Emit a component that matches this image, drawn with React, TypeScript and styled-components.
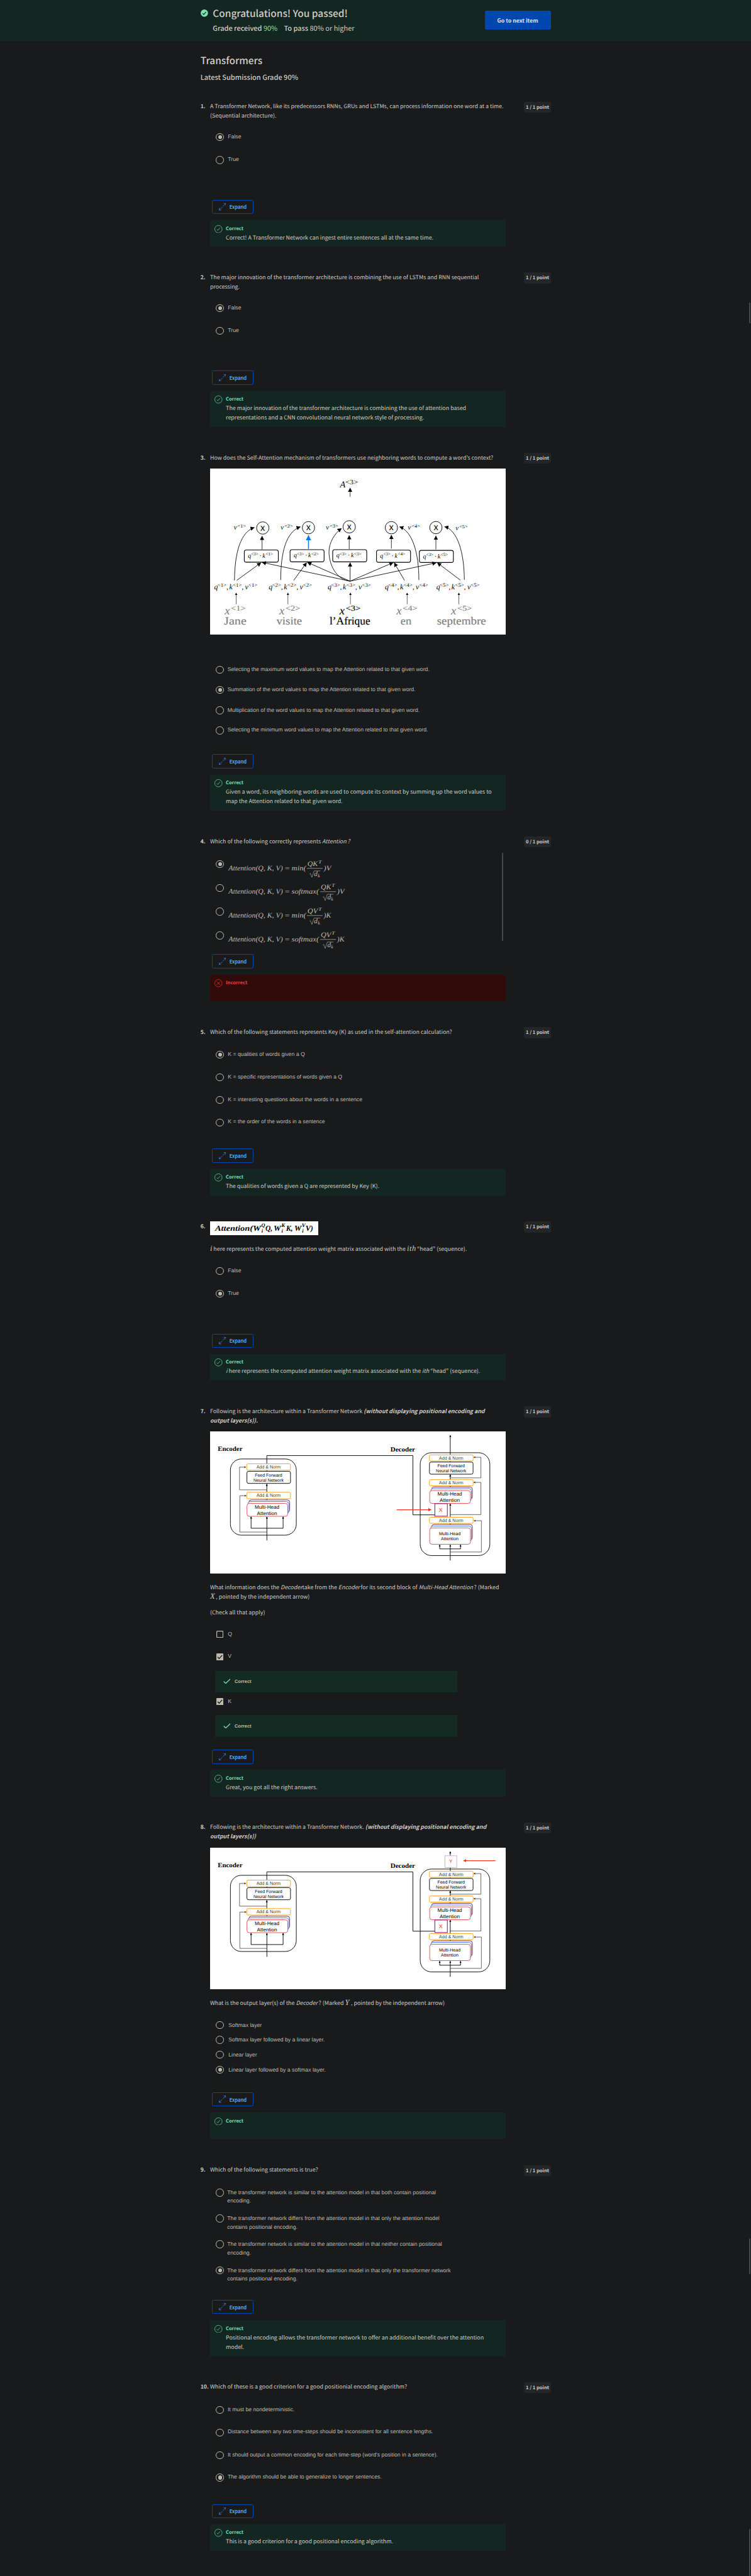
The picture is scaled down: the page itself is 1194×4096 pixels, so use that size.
import React from "react";
import styled, { createGlobalStyle, css } from "styled-components";

/* The page is designed on a 1920px wide canvas and drawn at a reduced scale. */
const SCALE = 0.62191;
const u = (n: number) => `${(n * SCALE).toFixed(3)}px`;

const sans = `"Noto Sans CJK KR", "Noto Sans", sans-serif`;
const arial = `"Liberation Sans", Arial, sans-serif`;
const serif = `"Liberation Serif", "Times New Roman", serif`;

const color = {
  page: "#181a1b",
  text: "#d0ccc6",
  label: "#bfbab0",
  green: "#7de2b0",
  greenPanel: "#142621",
  greenRow: "#132b23",
  red: "#ff3838",
  redPanel: "#310a0a",
  blue: "#0048b0",
  link: "#4ea2f7",
  badge: "#222628",
};

const GlobalStyle = createGlobalStyle`
  body {
    margin: 0;
    background: ${color.page};
    color: ${color.text};
    font-family: ${sans};
    text-rendering: geometricPrecision;
    overflow: hidden;
  }
`;

const Page = styled.div`
  position: relative;
  width: 1194px;
  height: 4096px;
  overflow: hidden;
  background: ${color.page};
`;

const Banner = styled.header`
  box-sizing: border-box;
  height: ${u(104)};
  padding: ${u(15.5)} ${u(512)} 0 ${u(512.5)};
  display: flex;
  justify-content: space-between;
  background: ${color.greenPanel};
`;
const BannerInfo = styled.div`
  display: flex;
  gap: ${u(12.5)};
`;
const BannerIcon = styled.svg`
  width: ${u(19)};
  height: ${u(19)};
  margin-top: ${u(9)};
`;
const BannerTitle = styled.h1`
  margin: 0;
  font-size: ${u(24.83)};
  line-height: ${u(36)};
  font-weight: 500;
  white-space: nowrap;
`;
const GradeLine = styled.div`
  display: flex;
  gap: ${u(16.5)};
  margin-top: ${u(10.3)};
  font-size: ${u(17.65)};
  line-height: ${u(24)};
  white-space: nowrap;
`;
const Strong = styled.span`
  font-weight: 500;
`;
const Passed = styled.span`
  color: ${color.green};
`;
const NextButton = styled.button`
  width: ${u(169)};
  height: ${u(48)};
  margin-top: ${u(12.5)};
  padding: 0;
  border: 0;
  border-radius: ${u(4)};
  background: ${color.blue};
  color: #e6e3df;
  font: 700 ${u(14.03)} ${sans};
`;

const Main = styled.main`
  padding: ${u(32.3)} ${u(512)} 0 ${u(512.5)};
`;
const Title = styled.h2`
  margin: 0;
  font-size: ${u(24.88)};
  line-height: ${u(36)};
  font-weight: 500;
`;
const Subtitle = styled.h3`
  margin: ${u(14.5)} 0 ${u(49.2)};
  font-size: ${u(17.73)};
  line-height: ${u(24)};
  font-weight: 500;
`;

const QuestionBox = styled.section`
  display: grid;
  grid-template-columns: ${u(24.5)} ${u(756)} ${u(68)};
  column-gap: 0;
  align-items: start;
  margin-bottom: ${u(66)};
`;
const Num = styled.div`
  padding-top: ${u(1)};
  font-size: ${u(14)};
  line-height: ${u(24)};
  font-weight: 700;
  white-space: nowrap;
`;
const Badge = styled.div`
  margin-left: ${u(47)};
  width: ${u(68)};
  height: ${u(28)};
  border-radius: ${u(4)};
  background: ${color.badge};
  font-size: ${u(12.16)};
  line-height: ${u(28)};
  font-weight: 700;
  text-align: center;
  white-space: nowrap;
`;
const Prompt = styled.p<{ $top?: number }>`
  margin: ${(p) => u(p.$top ?? 0)} 0 ${u(-1)};
  padding-top: ${u(1)};
  font-size: ${u(14.31)};
  line-height: ${u(24)};
  white-space: nowrap;
`;
const BoldItalic = styled.span`
  font-weight: 700;
  font-style: italic;
`;
const Em = styled.em<{ $gap?: number }>`
  margin-right: ${(p) => u(p.$gap ?? 0)};
`;
const MathWord = styled.span<{ $gap?: number }>`
  font: italic 400 ${u(20)} / 1 ${serif};
  line-height: 0;
  letter-spacing: ${u(0.9)};
  margin-right: ${(p) => u(p.$gap ?? 0)};
`;
const Figure = styled.svg<{ $w: number; $h: number; $top?: number }>`
  display: block;
  width: ${(p) => u(p.$w)};
  height: ${(p) => u(p.$h)};
  margin-top: ${(p) => u(p.$top ?? 0)};
  background: #fff;
`;

const Options = styled.div<{ $top: number; $height: number }>`
  position: relative;
  box-sizing: border-box;
  margin-top: ${(p) => u(p.$top)};
  height: ${(p) => u(p.$height)};
  padding-left: ${u(15.2)};
`;
const Option = styled.div<{ $pitch: number }>`
  display: flex;
  align-items: flex-start;
  gap: ${u(10)};
  height: ${(p) => u(p.$pitch)};
`;
const RadioMark = styled.span<{ $on?: boolean }>`
  box-sizing: border-box;
  flex: none;
  width: ${u(20)};
  height: ${u(20)};
  border: ${u(2)} solid ${color.label};
  border-radius: 50%;
  display: grid;
  place-items: center;
  ${(p) =>
    p.$on &&
    css`
      &::after {
        content: "";
        width: ${u(10)};
        height: ${u(10)};
        border-radius: 50%;
        background: ${color.label};
      }
    `}
`;
const OptionText = styled.span<{ $drop: number; $indent: number }>`
  margin-top: ${(p) => u(p.$drop)};
  margin-left: ${(p) => u(p.$indent)};
  color: ${color.label};
  font: 400 ${u(13.98)} / ${u(21)} ${arial};
  white-space: nowrap;
`;
const Formula = styled.svg`
  flex: none;
  width: ${u(290)};
  height: ${u(60)};
  margin-top: ${u(-10)};
  margin-left: ${u(-1)};
  overflow: visible;
`;
const OptionsScroll = styled.span`
  position: absolute;
  right: ${u(6.5)};
  top: ${u(-19)};
  width: ${u(3)};
  height: ${u(225)};
  border-radius: ${u(2)};
  background: #46494b;
`;
const Checkbox = styled.svg`
  flex: none;
  width: ${u(18)};
  height: ${u(18)};
  margin: ${u(1)};
`;
const RowFeedback = styled.div<{ $after: number }>`
  display: flex;
  align-items: center;
  gap: ${u(10.5)};
  box-sizing: border-box;
  width: ${u(620)};
  height: ${u(56)};
  margin: 0 0 ${(p) => u(p.$after)} ${u(-2.4)};
  padding-left: ${u(20.5)};
  background: ${color.greenRow};
  color: ${color.label};
  font: 700 ${u(12.05)} ${arial};
`;
const RowTick = styled.svg`
  width: ${u(19)};
  height: ${u(14)};
  margin-bottom: ${u(3)};
`;

const ExpandButton = styled.button`
  display: flex;
  align-items: center;
  gap: ${u(9)};
  box-sizing: border-box;
  width: ${u(105)};
  height: ${u(36)};
  margin: 0 0 ${u(16)} ${u(5.5)};
  padding: 0 0 0 ${u(15)};
  border: 1px solid ${color.blue};
  border-radius: ${u(4)};
  background: transparent;
  color: ${color.link};
  font: 700 ${u(12.15)} ${sans};
`;
const ExpandIcon = styled.svg`
  width: ${u(18.5)};
  height: ${u(18.5)};
`;
const Feedback = styled.div<{ $wrong?: boolean }>`
  display: flex;
  gap: ${u(8.2)};
  box-sizing: border-box;
  min-height: ${u(68)};
  padding: ${u(12)};
  background: ${(p) => (p.$wrong ? color.redPanel : color.greenPanel)};
`;
const FeedbackIcon = styled.svg`
  flex: none;
  width: ${u(20.2)};
  height: ${u(20.2)};
`;
const FeedbackBody = styled.div`
  height: 100%;
`;
const Verdict = styled.div<{ $wrong?: boolean }>`
  color: ${(p) => (p.$wrong ? color.red : color.green)};
  font-size: ${u(12.3)};
  line-height: ${u(20)};
  font-weight: 700;
`;

const PageScroll = styled.span<{ $y: number; $h: number }>`
  position: absolute;
  right: ${u(1)};
  top: ${(p) => u(p.$y)};
  width: ${u(3.6)};
  height: ${(p) => u(p.$h)};
  border-radius: ${u(2)};
  background: #46494b;
`;

/* ---------- Question parts ---------- */

function ExpandControl() {
  return (
    <ExpandButton>
      <ExpandIcon viewBox="0 0 18 18" fill="none" stroke="#4ea2f7" strokeWidth="1">
        <path d="M9.8 8.2 17 1M12 .9h5.1V6M8.2 9.8 1 17M6 17.1H.9V12" />
      </ExpandIcon>
      Expand
    </ExpandButton>
  );
}

function Result({ wrong, lines = [] }: { wrong?: boolean; lines?: React.ReactNode[] }) {
  return (
    <Feedback $wrong={wrong}>
      <FeedbackIcon viewBox="0 0 20 20" fill="none" stroke={wrong ? color.red : color.green} strokeWidth="1.1">
        <circle cx="10" cy="10" r="9.3" />
        {wrong ? <path d="M5.6 5.6l8.8 8.8M14.4 5.6l-8.8 8.8" /> : <path d="M5.8 10.6l2.7 2.7 5.4-6.6" />}
      </FeedbackIcon>
      <FeedbackBody>
        <Verdict $wrong={wrong}>{wrong ? "Incorrect" : "Correct"}</Verdict>
        {lines.map((l, i) => (
          <Prompt key={i}>{l}</Prompt>
        ))}
      </FeedbackBody>
    </Feedback>
  );
}

type QuestionProps = {
  n: number;
  score?: number;
  prompt: React.ReactNode;
  top: number;
  height: number;
  options: React.ReactNode;
  wrong?: boolean;
  lines?: React.ReactNode[];
};

function Question({ n, score = 1, prompt, top, height, options, wrong, lines }: QuestionProps) {
  return (
    <QuestionBox>
      <Num>{n}.</Num>
      <div>
        {prompt}
        <Options $top={top} $height={height}>
          {options}
        </Options>
        <ExpandControl />
        <Result wrong={wrong} lines={lines} />
      </div>
      <Badge>{score} / 1 point</Badge>
    </QuestionBox>
  );
}

type RadiosProps = {
  items: React.ReactNode[];
  chosen: number;
  pitch: number;
  drops?: number[];
  indent?: number;
};

function Radios({ items, chosen, pitch, drops = [], indent = 0.4 }: RadiosProps) {
  return (
    <>
      {items.map((item, i) => (
        <Option key={i} $pitch={pitch}>
          <RadioMark $on={i === chosen} />
          <OptionText $drop={drops[i] ?? 0} $indent={indent}>
            {item}
          </OptionText>
        </Option>
      ))}
    </>
  );
}

function CheckMark({ on }: { on?: boolean }) {
  return on ? (
    <Checkbox viewBox="0 0 18 18">
      <rect width="18" height="18" rx="2" fill={color.label} />
      <path d="M3.2 9.2l3.9 4.1 7.8-8.7" fill="none" stroke={color.page} strokeWidth="2" />
    </Checkbox>
  ) : (
    <Checkbox viewBox="0 0 18 18">
      <rect x="1" y="1" width="16" height="16" rx="1.5" fill="none" stroke={color.label} strokeWidth="2" />
    </Checkbox>
  );
}

function CorrectRow({ after }: { after: number }) {
  return (
    <RowFeedback $after={after}>
      <RowTick viewBox="0 0 19 14" fill="none" stroke={color.green} strokeWidth="2">
        <path d="M1 7.2l5.2 5.3L18 1" />
      </RowTick>
      Correct
    </RowFeedback>
  );
}

/* ---------- Formulas ---------- */

const fit = "spacingAndGlyphs";

function AttentionFormula({ fn, inner, outer }: { fn: "min(" | "softmax("; inner: string; outer: string }) {
  const soft = fn === "softmax(";
  const x = soft ? 238 : 204;
  return (
    <Formula viewBox="0 0 290 60" fill={color.label} fontFamily={serif} fontStyle="italic" fontSize="18">
      <text x="3.5" y="35" textLength="139" lengthAdjust={fit}>Attention(Q, K, V)</text>
      <text x="147.5" y="35.5" textLength="12.5" lengthAdjust={fit} fontStyle="normal">=</text>
      <text x="165" y="35" textLength={soft ? 70 : 37} lengthAdjust={fit}>{fn}</text>
      <text x={x + 1.5} y="24" textLength="26.5" lengthAdjust={fit}>{inner}</text>
      <text x={x + 29} y="18" fontSize="12" textLength="9" lengthAdjust={fit}>T</text>
      <path d={`M${x} 30.2h40.5`} stroke={color.label} strokeWidth="1.1" />
      <path d={`M${x + 7} 44.5l2-1.5 4 10 5.5-16.3h16`} fill="none" stroke={color.label} strokeWidth="1" />
      <text x={x + 18.5} y="49.3">d</text>
      <text x={x + 27.8} y="52.4" fontSize="12.5">k</text>
      <text x={x + 43} y="35" textLength="19" lengthAdjust={fit}>{")" + outer}</text>
    </Formula>
  );
}

function HeadFormula() {
  const parts: [string, number, number][] = [
    ["Attention(W", 12.9, 117],
    ["Q,", 141.5, 18],
    ["W", 162.5, 18.5],
    ["K,", 194, 17.5],
    ["W", 215.5, 18],
    ["V)", 244, 19.5],
  ];
  const scripts: [string, number][] = [["Q", 131], ["K", 182], ["V", 234.5]];
  return (
    <Figure $w={276} $h={35} viewBox="0 0 276 35" fontFamily={serif} fontStyle="italic" fontWeight="700" fontSize="19.5">
      {parts.map(([t, x, w], i) => (
        <text key={i} x={x} y="24" textLength={w} lengthAdjust={fit}>{t}</text>
      ))}
      {scripts.map(([t, x], i) => (
        <g key={i} fontSize="13.5">
          <text x={x} y="15" textLength="9.5" lengthAdjust={fit}>{t}</text>
          <text x={x + 0.5} y="29.3">i</text>
        </g>
      ))}
    </Figure>
  );
}

/* ---------- Self-attention figure ---------- */

function Sup({ x, y, w, size, n }: { x: number; y: number; w: number; size: number; n: number }) {
  return (
    <text x={x} y={y} fontSize={size} textLength={w} lengthAdjust={fit} fontStyle="normal">
      {`<${n}>`}
    </text>
  );
}

function SelfAttentionFigure() {
  const circles = [[134.7, 152], [251.6, 151.3], [355.7, 149], [463.5, 151.3], [577.3, 151]];
  const boxes = [[87.5, 208.3], [204.5, 207.5], [313.5, 207.5], [425.5, 208.7], [535, 209.2]];
  const ups = [[132.9, 207, 172.7], [251.6, 205.3, 170.7], [355.7, 206, 171], [463.5, 205, 170.3], [577.3, 206.7, 172]];
  const links = [
    "M68 286L130 241",
    "M358 288L133 240",
    "M358 288L249 240",
    "M358 288V240.5",
    "M358 288L468 240.5",
    "M358 288L578 241",
    "M213.7 286L246.7 240.7",
    "M497 286L470.8 241",
    "M639.8 285.3L581 241",
    "M62.4 286C63 215 78 162 113.3 150.7",
    "M180.6 285C180.6 215 194 162 230.8 149",
    "M358 288C322 284 304 245 304 213C304 190 318 166 336 153",
    "M533.8 285C533.8 215 517 160 484.3 149",
    "M650 284.5C649.5 215 633 158 599.4 148.4",
  ];
  const groups = [10.4, 150, 300.6, 447, 578.5];
  const values = [[60.6, 156], [180.6, 156], [296.3, 156], [505.7, 155.5], [627.5, 157]];
  const inputs = [66.7, 199, 358.8, 503.8, 636];
  const xs = [37.3, 177, 331, 476.3, 616];
  const words: [string, number, number][] = [
    ["Jane", 35.5, 57.5],
    ["visite", 169.6, 65.5],
    ["l’Afrique", 305.5, 104],
    ["en", 487, 28],
    ["septembre", 580, 125.5],
  ];
  const tone = (i: number) => (i === 2 ? "#000" : "#808080");
  return (
    <Figure $w={756} $h={424} $top={16} viewBox="0 0 756 424" fontFamily={serif} fontStyle="italic">
      <defs>
        <marker id="head" markerUnits="userSpaceOnUse" markerWidth="12" markerHeight="12" refX="10" refY="5.5" orient="auto">
          <path d="M0 0L10.5 5.5L0 11z" />
        </marker>
        <marker id="headBlue" markerUnits="userSpaceOnUse" markerWidth="16" markerHeight="16" refX="13" refY="7" orient="auto">
          <path d="M0 0L13.5 7L0 14z" fill="#0a78e8" />
        </marker>
        <marker id="headSmall" markerUnits="userSpaceOnUse" markerWidth="8" markerHeight="8" refX="6" refY="3.5" orient="auto">
          <path d="M0 0L6.5 3.5L0 7z" />
        </marker>
      </defs>
      <text x="332" y="48" fontSize="23">A</text>
      <Sup x={346} y={39.5} w={32} size={17} n={3} />
      <path d="M358 72V49.5" stroke="#000" strokeWidth="1.2" markerEnd="url(#head)" />
      {circles.map(([x, y], i) => (
        <g key={i}>
          <circle cx={x} cy={y} r="15.8" fill="none" stroke="#000" strokeWidth="1.5" />
          <text x={x} y={y + 6.4} fontFamily='"Open Sans", sans-serif' fontStyle="normal" fontWeight="600" fontSize="17.5" textAnchor="middle">X</text>
        </g>
      ))}
      {ups.map(([x, a, b], i) => (
        <path key={i} d={`M${x} ${a}V${b}`} stroke={i === 1 ? "#0a78e8" : "#000"} strokeWidth={i === 1 ? 2.4 : 1.3} markerEnd={i === 1 ? "url(#headBlue)" : "url(#head)"} />
      ))}
      {boxes.map(([x, y], i) => (
        <g key={i}>
          <rect x={x} y={y} width="87" height="31" rx="5" fill="none" stroke="#000" strokeWidth="1.8" />
          <text x={x + 9.2} y={y + 20} fontSize="16">q</text>
          <Sup x={x + 17} y={y + 14} w={19} size={11} n={3} />
          <text x={x + 39} y={y + 20} fontSize="16">·</text>
          <text x={x + 46.5} y={y + 20} fontSize="16">k</text>
          <Sup x={x + 54} y={y + 14} w={19.5} size={11} n={i + 1} />
        </g>
      ))}
      <g stroke="#000" strokeWidth="1.4" fill="none">
        {links.map((d) => (
          <path key={d} d={d} markerEnd="url(#head)" />
        ))}
      </g>
      {values.map(([x, y], i) => (
        <g key={i}>
          <text x={x} y={y} fontSize="17.5">v</text>
          <Sup x={x + 9.5} y={y - 4.4} w={21.5} size={12.5} n={i + 1} />
        </g>
      ))}
      {groups.map((x, i) => {
        const y = i === 4 ? 309 : 308;
        const terms: [string, number, number][] = [["q", 0, 8.6], ["k", 38.6, 47.8], ["v", 79, 87.7]];
        return (
          <g key={i} fontSize="19">
            {terms.map(([t, a, b]) => (
              <React.Fragment key={t}>
                <text x={x + a} y={y}>{t}</text>
                <Sup x={x + b} y={y - 6} w={22.8} size={13.5} n={i + 1} />
              </React.Fragment>
            ))}
            <text x={x + 31.5} y={y}>,</text>
            <text x={x + 70.5} y={y}>,</text>
          </g>
        );
      })}
      {inputs.map((x) => (
        <path key={x} d={`M${x} 347V318`} stroke="#000" strokeWidth="1" markerEnd="url(#headSmall)" />
      ))}
      {xs.map((x, i) => (
        <g key={i} fill={tone(i)} stroke={tone(i)} strokeWidth="0.2">
          <text x={x} y={i === 4 ? 373.5 : 372.7} fontSize="30">x</text>
          <Sup x={x + 15.5} y={i === 4 ? 364 : 363} w={38.5} size={19} n={i + 1} />
        </g>
      ))}
      {words.map(([t, x, w], i) => (
        <text key={t} x={x} y="399" fontSize="28" fontStyle="normal" fill={tone(i)} stroke={tone(i)} strokeWidth="0.3" textLength={w} lengthAdjust={fit}>
          {t}
        </text>
      ))}
    </Figure>
  );
}

/* ---------- Encoder / decoder figure ---------- */

function AddNorm({ x, y, h = 16.4, cx }: { x: number; y: number; h?: number; cx: number }) {
  return (
    <g>
      <rect x={x} y={y} width="111.6" height={h} rx="3" fill="#fff" stroke="#fba41c" strokeWidth="1.6" />
      <text x={cx} y={y + 12.3} textAnchor="middle" fill="#3c3c3c" textLength="62" lengthAdjust={fit} fontSize="11.6">Add &amp; Norm</text>
    </g>
  );
}

function FeedForward({ x, y }: { x: number; y: number }) {
  return (
    <g fontSize="11.4" textAnchor="middle">
      <rect x={x} y={y} width="111.4" height="31" rx="4" fill="#fff" stroke="#000" strokeWidth="1.5" />
      <text x={x + 55.3} y={y + 13} textLength="70" lengthAdjust={fit}>Feed Forward</text>
      <text x={x + 55.3} y={y + 26.7} textLength="77.5" lengthAdjust={fit}>Neural Network</text>
    </g>
  );
}

type MultiHeadProps = { x: number; y: number; h: number; back: number; size: number; a: number; b: number };

function MultiHead({ x, y, h, back, size, a, b }: MultiHeadProps) {
  const cx = x + 51.3;
  return (
    <g textAnchor="middle" fontSize={size}>
      <rect x={x + 5} y={y - 9} width="104.2" height={back} rx="6" fill="#fff" stroke="#4d1a48" strokeWidth="1.4" />
      <rect x={x + 2.5} y={y - 4.8} width="104.2" height={back} rx="6" fill="#fff" stroke="#2f66ee" strokeWidth="1.4" />
      <rect x={x} y={y} width="104.2" height={h} rx="6" fill="#fff" stroke="#f4505c" strokeWidth="1.6" />
      <text x={cx} y={a}>Multi-Head</text>
      <text x={cx} y={b}>Attention</text>
    </g>
  );
}

function TransformerFigure({ output }: { output?: boolean }) {
  const p = output ? "out" : "in";
  const end = `url(#${p}Black)`;
  const endGray = `url(#${p}Gray)`;
  return (
    <Figure $w={756} $h={363} $top={16} viewBox="0 0 756 363" fontFamily={arial}>
      <defs>
        <marker id={`${p}Black`} markerUnits="userSpaceOnUse" markerWidth="8" markerHeight="8" refX="5" refY="2.6" orient="auto">
          <path d="M0 0L5.5 2.6L0 5.2z" />
        </marker>
        <marker id={`${p}Gray`} markerUnits="userSpaceOnUse" markerWidth="8" markerHeight="8" refX="4" refY="2.6" orient="auto">
          <path d="M0 0L4.5 2.6L0 5.2z" fill="#444" />
        </marker>
        <marker id={`${p}Red`} markerUnits="userSpaceOnUse" markerWidth="10" markerHeight="10" refX="7" refY="4" orient="auto">
          <path d="M0 0L8 4L0 8z" fill="#ff2a1c" />
        </marker>
      </defs>
      <g fontFamily={serif} fontWeight="700" fontSize="16.5">
        <text x="19.6" y="49.7" textLength="63.2" lengthAdjust={fit}>Encoder</text>
        <text x="461" y="51.7" textLength="63.2" lengthAdjust={fit}>Decoder</text>
      </g>
      <path d="M527 44.5v1.5" stroke="#777" strokeWidth=".7" />
      <g fill="none" stroke="#000" strokeWidth="1.5">
        <rect x="52" y="70.5" width="168.4" height="194.8" rx="28" />
        <rect x="537.2" y="54.5" width="178" height="263" rx="29" />
        <path d="M145 133V61.8H518.5V213.4H574" />
        <path d="M145.2 278.7V218" markerEnd={end} />
        <path d="M145 190V134.5" markerEnd={end} />
        <path d="M145 247.6H104.8V218" markerEnd={end} />
        <path d="M145 247.6H186.7V218" markerEnd={end} />
        <path d="M614 110V9.8" markerEnd={end} />
        <path d="M614 160V110.4" markerEnd={end} />
        <path d="M614 250V185" markerEnd={end} />
        <path d="M614 330V290" markerEnd={end} />
        <path d="M614 300.4H587V290" markerEnd={end} />
        <path d="M614 300.4H640.3V290" markerEnd={end} />
      </g>
      <g fill="none" stroke="#444" strokeWidth="1.3">
        {["M145 149.4H75.3V91.4H91.5", "M145 257.4H76V164.4H92.5", "M614 118.8H692.4V66.2H674", "M614 212.8H692.4V130.4H674", "M614 308.4H693.6V228.4H674.6"].map((d) => (
          <path key={d} d={d} markerEnd={endGray} />
        ))}
      </g>
      <AddNorm x={93.9} y={82.9} cx={149.4} />
      <FeedForward x={94.2} y={102} />
      <AddNorm x={93.9} y={155.7} cx={149.4} />
      <MultiHead x={94.3} y={184.2} h={33} back={31} size={13} a={197.3} b={213.2} />
      <AddNorm x={560.8} y={60} h={15.7} cx={616.5} />
      <FeedForward x={560.9} y={78.4} />
      <AddNorm x={560.8} y={123.4} h={15.7} cx={616.5} />
      <MultiHead x={561.4} y={151.2} h={33} back={31} size={13} a={164.5} b={180.4} />
      <AddNorm x={560.8} y={219.4} h={15.7} cx={616.5} />
      <MultiHead x={561.4} y={247} h={41.6} back={39} size={11.4} a={265} b={278.7} />
      <rect x="574.6" y="184.8" width="32" height="32" fill="#fff" stroke="#8a2190" strokeWidth="1.8" />
      <text x="589.7" y="205.7" fontSize="14" fill="#ff2a1c" textAnchor="middle">X</text>
      {output ? (
        <>
          <rect x="600.3" y="20.6" width="30.3" height="30" fill="#fff" stroke="#cfa0d6" strokeWidth="1.4" />
          <text x="615.3" y="39.2" fontSize="12" fill="#ff2a1c" textAnchor="middle">Y</text>
          <path d="M729.5 33H648" stroke="#ff3a2c" strokeWidth="2" markerEnd={`url(#${p}Red)`} />
        </>
      ) : (
        <path d="M477 200.2H565" stroke="#ff3a2c" strokeWidth="2" markerEnd={`url(#${p}Red)`} />
      )}
    </Figure>
  );
}

/* ---------- Page ---------- */

const formulas = [
  ["min(", "QK", "V"],
  ["softmax(", "QK", "V"],
  ["min(", "QV", "K"],
  ["softmax(", "QV", "K"],
] as const;

export default function App() {
  return (
    <Page>
      <GlobalStyle />
      <Banner>
        <BannerInfo>
          <BannerIcon viewBox="0 0 19 19">
            <circle cx="9.5" cy="9.5" r="9.3" fill={color.green} />
            <path d="M5 9.8l3 3.1 5.8-6.8" fill="none" stroke={color.greenPanel} strokeWidth="1.9" />
          </BannerIcon>
          <div>
            <BannerTitle>Congratulations! You passed!</BannerTitle>
            <GradeLine>
              <span>
                <Strong>Grade received</Strong> <Passed>90%</Passed>
              </span>
              <span>
                <Strong>To pass</Strong> 80% or higher
              </span>
            </GradeLine>
          </div>
        </BannerInfo>
        <NextButton>Go to next item</NextButton>
      </Banner>
      <Main>
        <Title>Transformers</Title>
        <Subtitle>Latest Submission Grade 90%</Subtitle>

        <Question
          n={1}
          prompt={
            <>
              <Prompt>A Transformer Network, like its predecessors RNNs, GRUs and LSTMs, can process information one word at a time.</Prompt>
              <Prompt>(Sequential architecture).</Prompt>
            </>
          }
          top={33}
          height={170}
          options={<Radios items={["False", "True"]} chosen={0} pitch={58} drops={[-1, -2]} />}
          lines={["Correct! A Transformer Network can ingest entire sentences all at the same time."]}
        />
        <Question
          n={2}
          prompt={
            <>
              <Prompt>The major innovation of the transformer architecture is combining the use of LSTMs and RNN sequential</Prompt>
              <Prompt>processing.</Prompt>
            </>
          }
          top={33}
          height={170}
          options={<Radios items={["False", "True"]} chosen={0} pitch={58} drops={[-1, -2]} />}
          lines={[
            "The major innovation of the transformer architecture is combining the use of attention based",
            "representations and a CNN convolutional neural network style of processing.",
          ]}
        />
        <Question
          n={3}
          prompt={
            <>
              <Prompt>How does the Self-Attention mechanism of transformers use neighboring words to compute a word’s context?</Prompt>
              <SelfAttentionFigure />
            </>
          }
          top={81}
          height={226}
          options={
            <Radios
              items={[
                "Selecting the maximum word values to map the Attention related to that given word.",
                "Summation of the word values to map the Attention related to that given word.",
                "Multiplication of the word values to map the Attention related to that given word.",
                "Selecting the minimum word values to map the Attention related to that given word.",
              ]}
              chosen={1}
              pitch={51.67}
              drops={[-1, -2, -1, -2]}
              indent={-0.6}
            />
          }
          lines={[
            "Given a word, its neighboring words are used to compute its context by summing up the word values to",
            "map the Attention related to that given word.",
          ]}
        />
        <Question
          n={4}
          score={0}
          prompt={
            <Prompt>
              Which of the following correctly represents <Em $gap={-0.5}>Attention</Em> <Em>?</Em>
            </Prompt>
          }
          top={37}
          height={240.5}
          wrong
          options={
            <>
              {formulas.map(([fn, inner, outer], i) => (
                <Option key={i} $pitch={60.67}>
                  <RadioMark $on={i === 0} />
                  <AttentionFormula fn={fn} inner={inner} outer={outer} />
                </Option>
              ))}
              <OptionsScroll />
            </>
          }
        />
        <Question
          n={5}
          prompt={<Prompt>Which of the following statements represents Key (K) as used in the self-attention calculation?</Prompt>}
          top={37}
          height={250}
          options={
            <Radios
              items={[
                "K = qualities of words given a Q",
                "K = specific representations of words given a Q",
                "K = interesting questions about the words in a sentence",
                "K = the order of the words in a sentence",
              ]}
              chosen={0}
              pitch={57.67}
              drops={[-1, -2, -1, -2]}
            />
          }
          lines={["The qualities of words given a Q are represented by Key (K)."]}
        />
        <Question
          n={6}
          prompt={
            <>
              <HeadFormula />
              <Prompt $top={24}>
                <MathWord $gap={-1}>i</MathWord> here represents the computed attention weight matrix associated with the <MathWord $gap={-1}>ith</MathWord> “head” (sequence).
              </Prompt>
            </>
          }
          top={34}
          height={170}
          options={<Radios items={["False", "True"]} chosen={1} pitch={58} drops={[-1, -2]} />}
          lines={[
            <>
              <Em>i</Em> here represents the computed attention weight matrix associated with the <Em>ith</Em> “head” (sequence).
            </>,
          ]}
        />
        <Question
          n={7}
          prompt={
            <>
              <Prompt>
                Following is the architecture within a Transformer Network <BoldItalic>(without displaying positional encoding and</BoldItalic>
              </Prompt>
              <Prompt>
                <BoldItalic>output layers(s)).</BoldItalic>
              </Prompt>
              <TransformerFigure />
              <Prompt $top={24}>
                What information does the <Em>Decoder</Em>take from the <Em $gap={2.5}>Encoder</Em>for its second block of <Em $gap={2.5}>Multi-Head Attention</Em>? (Marked
              </Prompt>
              <Prompt>
                <MathWord $gap={2}>X</MathWord>, pointed by the independent arrow)
              </Prompt>
              <Prompt $top={16}>(Check all that apply)</Prompt>
            </>
          }
          top={34}
          height={305}
          options={
            <>
              <Option $pitch={58}>
                <CheckMark />
                <OptionText $drop={-1} $indent={0.4}>Q</OptionText>
              </Option>
              <Option $pitch={45}>
                <CheckMark on />
                <OptionText $drop={-2} $indent={0.4}>V</OptionText>
              </Option>
              <CorrectRow after={12.5} />
              <Option $pitch={45.5}>
                <CheckMark on />
                <OptionText $drop={-1} $indent={0.4}>K</OptionText>
              </Option>
              <CorrectRow after={0} />
            </>
          }
          lines={["Great, you got all the right answers."]}
        />
        <Question
          n={8}
          prompt={
            <>
              <Prompt>
                Following is the architecture within a Transformer Network. <BoldItalic>(without displaying positional encoding and</BoldItalic>
              </Prompt>
              <Prompt>
                <BoldItalic>output layers(s))</BoldItalic>
              </Prompt>
              <TransformerFigure output />
              <Prompt $top={23}>
                What is the output layer(s) of the <Em $gap={2.5}>Decoder</Em>? (Marked <MathWord>Y</MathWord> , pointed by the independent arrow)
              </Prompt>
            </>
          }
          top={34}
          height={182}
          options={
            <Radios
              items={["Softmax layer", "Softmax layer followed by a linear layer.", "Linear layer", "Linear layer followed by a softmax layer."]}
              chosen={3}
              pitch={38}
              indent={1.8}
            />
          }
        />
        <Question
          n={9}
          prompt={<Prompt>Which of the following statements is true?</Prompt>}
          top={37}
          height={284}
          options={
            <Radios
              items={[
                <>The transformer network is similar to the attention model in that both contain positional<br />encoding.</>,
                <>The transformer network differs from the attention model in that only the attention model<br />contains positional encoding.</>,
                <>The transformer network is similar to the attention model in that neither contain positional<br />encoding.</>,
                <>The transformer network differs from the attention model in that only the transformer network<br />contains positional encoding.</>,
              ]}
              chosen={3}
              pitch={66}
              indent={-1.2}
            />
          }
          lines={["Positional encoding allows the transformer network to offer an additional benefit over the attention", "model."]}
        />
        <Question
          n={10}
          prompt={<Prompt>Which of these is a good criterion for a good positionial encoding algorithm?</Prompt>}
          top={37.5}
          height={250.5}
          options={
            <Radios
              items={[
                "It must be nondeterministic.",
                "Distance between any two time-steps should be inconsistent for all sentence lengths.",
                "It should output a common encoding for each time-step (word’s position in a sentence).",
                "The algorithm should be able to generalize to longer sentences.",
              ]}
              chosen={3}
              pitch={57.67}
              drops={[-1, -2, -1, -2]}
              indent={-0.2}
            />
          }
          lines={["This is a good criterion for a good positional encoding algorithm."]}
        />
      </Main>
      <PageScroll $y={773} $h={54} />
      <PageScroll $y={5723} $h={91} />
      <PageScroll $y={6465} $h={121} />
    </Page>
  );
}
